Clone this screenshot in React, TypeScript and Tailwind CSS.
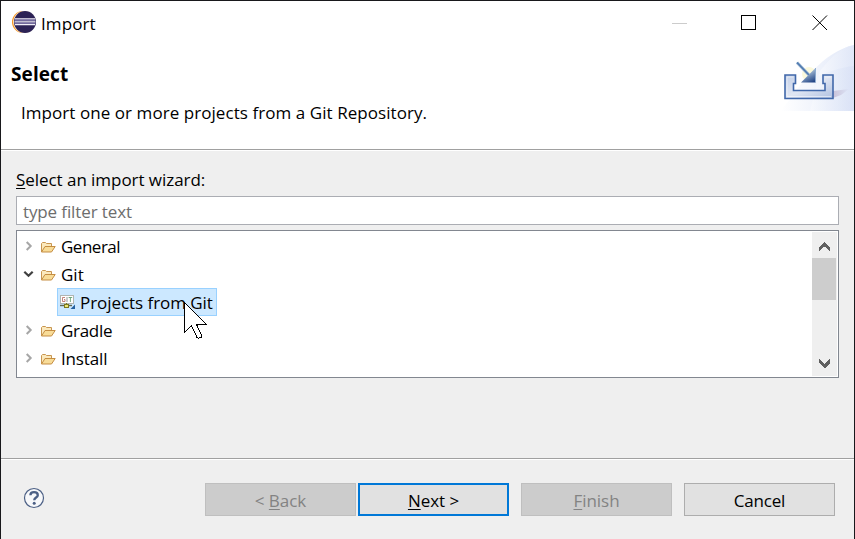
import React from "react";

function EclipseLogo() {
  return (
    <svg width="24" height="22" viewBox="0 0 24 22" className="block">
      <circle cx="11" cy="11" r="11" fill="#f7941e" />
      <circle cx="12.2" cy="11" r="11" fill="#fff3df" />
      <circle cx="13" cy="11" r="11" fill="#2c2255" />
      <path d="M3 7.8h20M2.5 10.8h21M3 13.6h20" stroke="#f1eff8" strokeWidth="1.3" />
      <path d="M2.5 9.2h21M2.5 12.2h21" stroke="#8b83b5" strokeWidth="1.2" />
    </svg>
  );
}

function ImportBanner() {
  return (
    <svg width="74" height="68" viewBox="0 0 74 68" className="block">
      <defs>
        <linearGradient id="sweep" x1="0" x2="1" y1="0" y2="0">
          <stop offset="0" stopColor="#ffffff" />
          <stop offset="1" stopColor="#e0e7f8" />
        </linearGradient>
        <linearGradient id="sweep2" x1="0" x2="1" y1="0" y2="0">
          <stop offset="0" stopColor="#f4f7fd" />
          <stop offset="1" stopColor="#d6dff5" />
        </linearGradient>
        <linearGradient id="tray" x1="0" x2="1" y1="0" y2="1">
          <stop offset="0" stopColor="#c3d0e8" />
          <stop offset="0.5" stopColor="#e0e6f3" />
          <stop offset="1" stopColor="#aebfe0" />
        </linearGradient>
        <linearGradient id="shade" x1="0" x2="1" y1="0" y2="0">
          <stop offset="0" stopColor="#c2b7d0" />
          <stop offset="1" stopColor="#dce4f7" />
        </linearGradient>
        <linearGradient id="head" x1="0.4" x2="0.8" y1="0.2" y2="1">
          <stop offset="0" stopColor="#b5cbe0" />
          <stop offset="1" stopColor="#1f4284" />
        </linearGradient>
      </defs>
      <path d="M1 67C22 38 43 8 74 1V67Z" fill="url(#sweep)" />
      <path d="M40 27C52 12 62 3 74 1V67H30Z" fill="url(#sweep)" opacity="0.7" />
      <path d="M30 36C45 29 60 23 74 22V67H30Z" fill="url(#sweep2)" opacity="0.6" />
      <path d="M53 47L69 45L61 51L53 54Z" fill="url(#shade)" opacity="0.8" />
      <circle cx="29" cy="30" r="7" fill="#fbf9dc" />
      <path d="M5 31H15.5V39.5H13.5V46.5H45V39.5H43V31H53V54.5H5Z" fill="url(#tray)" stroke="#4168aa" strokeWidth="1.6" />
      <path d="M7 33V52.5H51M7 33H13.5M45 33H51" fill="none" stroke="#ffffff" strokeWidth="1" opacity=".5" />
      <path d="M17 18.5L29 31" stroke="#9ab4d2" strokeWidth="3" />
      <path d="M17 18.5L29 31" stroke="#4d78ae" strokeWidth="1.4" />
      <path d="M35.5 24V38.5H21Z" fill="url(#head)" />
      <path d="M35.5 24V38.5" stroke="#8eacd0" />
    </svg>
  );
}

function Folder() {
  return (
    <svg width="16" height="14" viewBox="0 0 16 14" className="block shrink-0">
      <path d="M1.5 12V3.5L2.5 2.5H5.5L6.5 3.5H11.5V7" fill="#fbe9bd" stroke="#c89650" />
      <path d="M1.5 12L5 6.5H15.2L11.5 12Z" fill="#f8dc98" stroke="#c58d42" strokeLinejoin="round" />
    </svg>
  );
}

function GitIcon() {
  return (
    <svg width="16" height="16" viewBox="0 0 16 16" className="block shrink-0">
      <rect x=".5" y="1.5" width="13" height="8" fill="#fff" stroke="#b0b5b2" />
      <path d="M5 3.5H2.5v4H5V5.5H4" fill="none" stroke="#b4655b" strokeWidth=".8" />
      <path d="M7 3v5" stroke="#7b8080" strokeWidth=".8" />
      <path d="M8.6 3.5h3.6M10.4 3.5V8" stroke="#63a273" strokeWidth=".9" />
      <path d="M0 11.5H12" stroke="#62654f" strokeWidth="1.4" />
      <path d="M6.5 9v2" stroke="#7c7921" />
      <rect x="4.5" y="10.5" width="4" height="3" fill="#eee876" stroke="#7c7921" />
      <path d="M15 10.5v4.5h-4.5Z" fill="#24609f" />
    </svg>
  );
}

function Twisty({ open }: { open?: boolean }) {
  return (
    <svg width="12" height="12" viewBox="0 0 12 12" className="block shrink-0">
      {open ? (
        <path d="M1.3 3.7L5.5 7.8L9.7 3.7" fill="none" stroke="#404040" strokeWidth="2.2" />
      ) : (
        <path d="M3.7 2L7.7 6L3.7 10" fill="none" stroke="#a6a6a6" strokeWidth="2" />
      )}
    </svg>
  );
}

function TreeRow({ label, open, tracking = "tracking-[-0.3px]" }: { label: string; open?: boolean; tracking?: string }) {
  return (
    <div className="flex h-7 items-center pl-[5px]">
      <Twisty open={open} />
      <div className="ml-[5px] pt-px"><Folder /></div>
      <span className={`ml-[5px] pt-px leading-7 ${tracking}`}>{label}</span>
    </div>
  );
}

function Chevron({ down }: { down?: boolean }) {
  return (
    <svg width="12" height="10" viewBox="0 0 12 10" className="block" shapeRendering="crispEdges">
      <path d={down ? "M0 0L5.5 5L11 0V4L5.5 9.5L0 4Z" : "M0 9.5L5.5 4.5L11 9.5V5.5L5.5 0L0 5.5Z"} fill="#606060" />
    </svg>
  );
}

function Cursor() {
  return (
    <svg width="24" height="38" viewBox="0 0 24 38" className="block" shapeRendering="crispEdges">
      <path d="M.5 .5V30.5L7.5 23.5L13 35.5Q15 37 17.5 35V33L12.5 22.5H22.5Z" fill="#fff" stroke="#000" />
    </svg>
  );
}

const buttonBase = "flex h-[33px] w-[151px] items-center justify-center pt-0.5";

export default function App() {
  return (
    <div className="flex h-[539px] w-[855px] flex-col overflow-hidden border-x border-t border-[#18181b] bg-[#efefef] font-['Open_Sans',sans-serif] text-[17px] tracking-[-0.05px] text-black">
      <header className="h-[148px] shrink-0 bg-white">
        <div className="flex h-[43px] items-center">
          <div className="-mt-0.5 ml-[11px]"><EclipseLogo /></div>
          <span className="ml-[5px] mt-0.5 tracking-[0.1px]">Import</span>
          <svg width="156" height="16" viewBox="0 0 156 16" className="ml-auto mr-[26px] block" fill="none" shapeRendering="crispEdges">
            <path d="M0 8.5H15" stroke="#cccccc" />
            <rect x="69.5" y=".5" width="14" height="14" stroke="#000" />
            <path d="M140.5 .5L155 15M155 .5L140.5 15" stroke="#000" shapeRendering="auto" />
          </svg>
        </div>
        <div className="flex h-[68px] justify-between">
          <div>
            <h1 className="ml-2.5 mt-[18px] text-[19px] font-bold leading-6 tracking-[0.1px]">Select</h1>
            <p className="ml-5 mt-[15px] leading-6 tracking-[0.06px]">Import one or more projects from a Git Repository.</p>
          </div>
          <ImportBanner />
        </div>
      </header>
      <main className="h-[309px] shrink-0 border-t border-[#a0a0a0]">
        <div className="h-px bg-white" />
        <div className="px-[15px] pt-[17px]">
          <div className="h-7 leading-6"><span className="underline decoration-1 underline-offset-2">S</span>elect an import wizard:</div>
          <div className="flex h-[29px] w-[823px] items-center border border-[#abadb3] bg-white pl-1.5 pt-0.5 tracking-[-0.12px] text-[#6d6d6d]">type filter text</div>
          <div className="relative mt-[5px] flex h-[148px] w-[823px] border border-[#828790] bg-white p-px">
            <div className="flex-1">
              <TreeRow label="General" tracking="tracking-[-0.5px]" />
              <TreeRow label="Git" open tracking="tracking-[0px]" />
              <div className="ml-[39px] flex h-7 w-[160px] items-center border border-[#99d1ff] bg-[#cce8ff] pl-0.5">
                <GitIcon />
                <span className="ml-1 pt-px tracking-[-0.05px]">Projects from Git</span>
              </div>
              <TreeRow label="Gradle" />
              <TreeRow label="Install" tracking="tracking-[-0.15px]" />
            </div>
            <div className="flex w-[25px] flex-col bg-[#efefef]">
              <div className="flex h-[26px] items-center justify-center pt-1"><Chevron /></div>
              <div className="h-[42px] w-6 bg-[#cdcdcd]" />
              <div className="mt-auto flex h-[26px] items-center justify-center pt-px"><Chevron down /></div>
            </div>
            <div className="absolute left-[167px] top-[71px]"><Cursor /></div>
          </div>
        </div>
      </main>
      <footer className="flex-1 border-t border-[#a0a0a0]">
        <div className="h-px bg-white" />
        <div className="flex items-start pl-[22px] pr-[19px] pt-[23px]">
          <svg width="22" height="22" viewBox="0 0 22 22" className="mt-1 block">
            <circle cx="11" cy="11" r="9.5" fill="#f7f8fa" stroke="#4c6085" strokeWidth="1.2" />
            <path d="M7.4 8.2C7.4 5.9 9 5.2 11 5.2S14.8 6.2 14.8 8.2C14.8 10.5 11.2 10.5 11.2 13.2" fill="none" stroke="#4c6085" strokeWidth="2.3" />
            <circle cx="11.2" cy="16.3" r="1.5" fill="#4c6085" />
          </svg>
          <div className={`${buttonBase} ml-auto border border-[#bfbfbf] bg-[#cccccc] text-[#838383]`}><span>&lt; <u className="underline-offset-2">B</u>ack</span></div>
          <div className={`${buttonBase} ml-0.5 border-2 border-[#0078d7] bg-[#e1e1e1]`}><span><u className="underline-offset-2">N</u>ext &gt;</span></div>
          <div className={`${buttonBase} ml-3 border border-[#bfbfbf] bg-[#cccccc] text-[#838383]`}><span><u className="underline-offset-2">F</u>inish</span></div>
          <div className={`${buttonBase} ml-3 border border-[#adadad] bg-[#e1e1e1]`}><span className="tracking-[-0.2px]">Cancel</span></div>
        </div>
      </footer>
    </div>
  );
}
